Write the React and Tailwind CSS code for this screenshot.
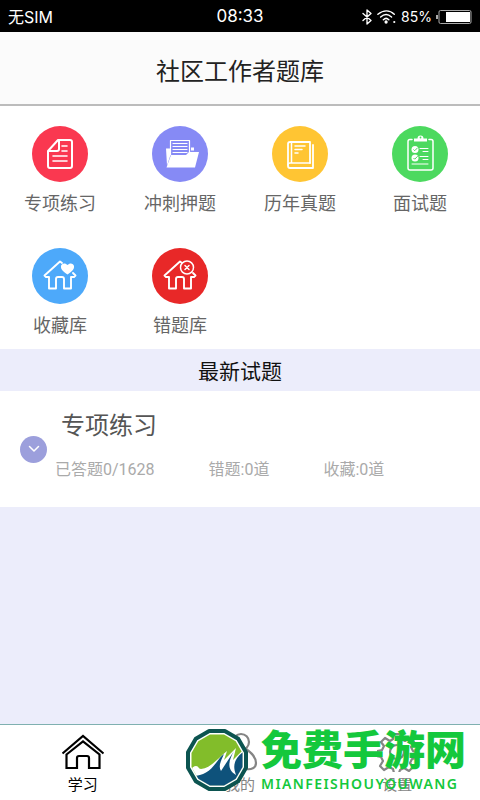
import React from "react";

const line = { fill: "none", stroke: "currentColor", strokeLinecap: "round", strokeLinejoin: "round" };

function NoteIcon() {
  return (
    <svg viewBox="0 0 56 56" className="size-14" aria-hidden="true" {...line} strokeWidth="2">
      <path d="M26 14h12a2 2 0 0 1 2 2v24a2 2 0 0 1-2 2H18a2 2 0 0 1-2-2V25zM27 14v9a2 2 0 0 1-2 2h-9" />
      <path d="M30 20h5M30 25h5M21 30h14M21 35h14" strokeWidth="1.600" />
    </svg>
  );
}

function FolderIcon() {
  return (
    <svg viewBox="0 0 56 56" className="size-14" aria-hidden="true">
      <path d="M14 22.500h4v8l-3 9zM39 21.500h3v3h-3z" fill="currentColor" />
      <path d="M18.500 29V14.500h19V27" {...line} strokeWidth="1.200" />
      <path d="M21 17.500h14M21 20.500h14M21 23.500h14M21 26.500h14" {...line} strokeWidth="1.200" />
      <path d="M19 29h15l3-3h10l-4 15.500H14.500z" fill="currentColor" />
    </svg>
  );
}

function BookIcon() {
  return (
    <svg viewBox="0 0 56 56" className="size-14" aria-hidden="true" {...line} strokeWidth="1.800">
      <path d="M38 37V16H18a2 2 0 0 0-2 2v22a2 2 0 0 0 2 2h23V19" />
      <path d="M38 37H18a2 2 0 0 0-2 2M19.500 17v20" strokeWidth="1.500" />
      <path d="M23 20h10M23 23.500h7M23 27h3" strokeWidth="1.500" />
    </svg>
  );
}

function ClipboardIcon() {
  return (
    <svg viewBox="0 0 56 56" className="size-14" aria-hidden="true">
      <path d="M20 13.500h-2a2 2 0 0 0-2 2V42a2 2 0 0 0 2 2h21a2 2 0 0 0 2-2V15.500a2 2 0 0 0-2-2h-2" {...line} strokeWidth="1.500" />
      <path d="M22 15.500v-3h3.500a3 3 0 0 1 6 0H35v3z" fill="currentColor" />
      <circle cx="28.500" cy="11.500" r="0.900" fill="#4cd95f" />
      <path d="M28 22.500h8M31 25.500h5M28 30.500h8M31 33.500h5M20 38h16" {...line} strokeWidth="1" />
      <circle cx="23" cy="23.500" r="3.500" fill="currentColor" />
      <circle cx="23" cy="32" r="3.500" fill="currentColor" />
      <path d="m21.500 23.500 1.200 1.200 3-3M21.500 32l1.200 1.200 3-3" fill="none" stroke="#4cd95f" strokeWidth="1" />
    </svg>
  );
}

function HouseOutline() {
  return (
    <path d="M30 15 28 13.500 12.500 27.500l1.500 1.500h3v11.500h7V31a2 2 0 0 1 2-2h4a2 2 0 0 1 2 2v9.500h7V29h3l1.500-1.500-2.500-2.500" {...line} strokeWidth="1.900" />
  );
}

function HouseHeartIcon() {
  return (
    <svg viewBox="0 0 56 56" className="size-14" aria-hidden="true">
      <HouseOutline />
      <path d="M35.500 26.500c-4-3-7-5-6.500-8.500.5-3 4.500-3.500 6.500-1 2-2.500 6-2 6.500 1 .5 3.500-2.500 5.500-6.500 8.500z" fill="currentColor" />
    </svg>
  );
}

function HouseErrorIcon() {
  return (
    <svg viewBox="0 0 56 56" className="size-14" aria-hidden="true">
      <HouseOutline />
      <circle cx="35" cy="19.500" r="6.500" fill="#e82828" stroke="currentColor" strokeWidth="1.500" />
      <path d="m33 17.500 4 4m0-4-4 4" {...line} strokeWidth="1.500" />
    </svg>
  );
}

function HomeTabIcon() {
  return (
    <svg viewBox="0 0 44 36" className="h-9 w-11" aria-hidden="true" fill="none" stroke="currentColor" strokeWidth="2.200">
      <path d="M1.500 19.500 22 2l20.500 17.500" />
      <path d="M5.500 20.500 22 7.500l16.500 13V34H28V24a2 2 0 0 0-2-2h-8a2 2 0 0 0-2 2v10H5.500z" />
    </svg>
  );
}

function UserTabIcon() {
  return (
    <svg viewBox="0 0 44 40" className="h-10 w-11" aria-hidden="true" fill="none" stroke="currentColor" strokeWidth="2.200">
      <circle cx="23" cy="10" r="8" />
      <path d="M17 17C10 20 6 26 6 31c0 5 5 7 10 6 4-1 5-2 6-2s2 1 6 2c5 1 10-1 10-6s-4-10-10-14" />
    </svg>
  );
}

function GearTabIcon() {
  return (
    <svg viewBox="0 0 40 40" className="size-10" aria-hidden="true" {...line} strokeWidth="2.200">
      <path d="M17 2h6l1 5 4 2 5-3 4 4-3 5 2 4 3 1v6l-4 1-2 4 3 4-4 4-5-3-4 2-1 3h-5l-1-4-4-2-5 3-4-4 3-5-2-4-4-1v-5l5-1 2-4-3-4 4-4 5 3 3-2z" />
      <circle cx="20" cy="20" r="7" />
    </svg>
  );
}

function WatermarkLogo() {
  return (
    <svg viewBox="0 0 64 64" className="size-16 shrink-0" aria-hidden="true">
      <path
        d="M61 24.200 53.200 10.800 39.800 3H24.200L10.800 10.800 3 24.200v15.600l7.800 13.400L24.200 61h15.600l13.400-7.800L61 39.800z"
        fill="#fff"
        stroke="#0c5450"
        strokeWidth="4"
        strokeLinejoin="round"
      />
      <clipPath id="badge-inner">
        <path d="M57.500 25 50.700 13.300 39 6.500H25L13.300 13.300 6.500 25v14l6.800 11.700L25 57.500h14l11.700-6.800L57.500 39z" />
      </clipPath>
      <g clipPath="url(#badge-inner)">
        <path d="M0 0h64v64H0z" fill="#82bd2a" />
        <path d="M4 43c3-2 4-5 7-5 3 0 2 3 5 3 10-1 16-10 26-18l-3 9 12-12-3 12 9-9h7v41H0V45z" fill="#fff" />
        <path d="M8 48c10 0 17-5 23-13 3-4 5-7 8-9-3 7-6 12-3 17l13-20c-5 9-8 18 2 24-3-8-3-15 7-23h6v40H8z" fill="#0e527b" />
      </g>
    </svg>
  );
}

const categories = [
  { name: "专项练习", color: "bg-[#fa3850]", Icon: NoteIcon },
  { name: "冲刺押题", color: "bg-[#868af5]", Icon: FolderIcon },
  { name: "历年真题", color: "bg-[#ffc533]", Icon: BookIcon },
  { name: "面试题", color: "bg-[#4cd95f]", Icon: ClipboardIcon },
  { name: "收藏库", color: "bg-[#4da9fa]", Icon: HouseHeartIcon },
  { name: "错题库", color: "bg-[#e82828]", Icon: HouseErrorIcon },
];

const tabs = [
  { name: "学习", color: "text-black", Icon: HomeTabIcon },
  { name: "我的", color: "text-[#858585]", Icon: UserTabIcon },
  { name: "设置", color: "text-[#858585]", Icon: GearTabIcon },
];

function StatusBar() {
  return (
    <div className="grid h-8 grid-cols-3 items-center bg-black px-2 pt-0.5 font-['Inter','Noto_Sans_CJK_SC',sans-serif] text-white">
      <span className="text-base">无SIM</span>
      <span className="text-center text-[17px]">08:33</span>
      <div className="flex items-center justify-end gap-1">
        <svg viewBox="0 0 12 18" className="h-4 w-3" aria-label="蓝牙" role="img" {...line} strokeWidth="1.500">
          <path d="m1.500 5 9 8L6 17V1l4.500 4-9 8" />
        </svg>
        <svg viewBox="0 0 22 16" className="h-4 w-5" aria-label="无线网络" role="img" {...line} strokeWidth="1.600">
          <path d="M1 5c6-5 13-5 18 0M4 8c4-3.500 8-3.500 12 0M7 11c2-2 4-2 6 0" />
          <circle cx="10" cy="13.500" r="1" fill="currentColor" />
          <circle cx="19" cy="13.500" r="1.200" fill="currentColor" stroke="none" />
        </svg>
        <span className="text-sm">85%</span>
        <svg viewBox="0 0 36 14" className="h-3.5 w-9" aria-label="电量" role="img">
          <rect x="3" y="0.500" width="32" height="13" rx="1.500" fill="none" stroke="#aaa" />
          <path d="M0 5h2v4H0z" fill="#aaa" />
          <path d="M10 2h24v10H10z" fill="#fff" />
        </svg>
      </div>
    </div>
  );
}

export default function App() {
  return (
    <div className="relative flex min-h-screen flex-col bg-[#ecedfb] font-['Roboto','Noto_Sans_CJK_SC',sans-serif]">
      <StatusBar />
      <header className="flex h-[74px] items-center justify-center border-b-2 border-[#bcbcbc] bg-[#fbfbfb] pt-2">
        <h1 className="text-2xl text-[#222]">社区工作者题库</h1>
      </header>

      <section className="grid grid-cols-4 gap-y-[26px] bg-white pt-5 pb-[5px]">
        {categories.map(({ name, color, Icon }) => (
          <button key={name} type="button" className="flex flex-col items-center gap-1 text-lg text-[#666]">
            <span className={`rounded-full text-white ${color}`}>
              <Icon />
            </span>
            <span className="py-1">{name}</span>
          </button>
        ))}
      </section>

      <h2 className="flex h-[42px] items-center justify-center pt-1.5 text-[21px] text-[#111]">最新试题</h2>

      <section className="flex h-[116px] items-center bg-white px-5">
        <button type="button" aria-label="展开" className="flex size-[27px] shrink-0 items-center justify-center rounded-full bg-[#9c9fdc] text-white">
          <svg viewBox="0 0 12 8" className="h-2 w-3" aria-hidden="true" {...line} strokeWidth="1.500">
            <path d="m1.500 1.500 4.500 4.500 4.500-4.500" />
          </svg>
        </button>
        <div className="flex flex-col gap-4 pb-1.5 pl-2">
          <h3 className="px-1.5 text-2xl text-[#555]">专项练习</h3>
          <div className="flex gap-[54px] text-base text-[#aaa]">
            <span>已答题0/1628</span>
            <span>错题:0道</span>
            <span>收藏:0道</span>
          </div>
        </div>
      </section>

      <nav className="mt-auto grid h-[76px] grid-cols-3 border-t border-[#7fb0b0] bg-white px-1">
        {tabs.map(({ name, color, Icon }) => (
          <button key={name} type="button" className={`flex flex-col items-center ${color}`}>
            <span className="flex h-[50px] items-center pt-1">
              <Icon />
            </span>
            <span className="text-[15px] leading-5">{name}</span>
          </button>
        ))}
      </nav>

      <div className="pointer-events-none absolute right-3.5 bottom-1.5 flex items-start gap-3 text-[#14c83c]">
        <WatermarkLogo />
        <div className="flex flex-col">
          <span className="text-[41px] leading-[46px] font-black">免费手游网</span>
          <span className="font-['Noto_Sans',sans-serif] text-sm leading-5 font-semibold tracking-widest">MIANFEISHOUYOUWANG</span>
        </div>
      </div>
    </div>
  );
}
